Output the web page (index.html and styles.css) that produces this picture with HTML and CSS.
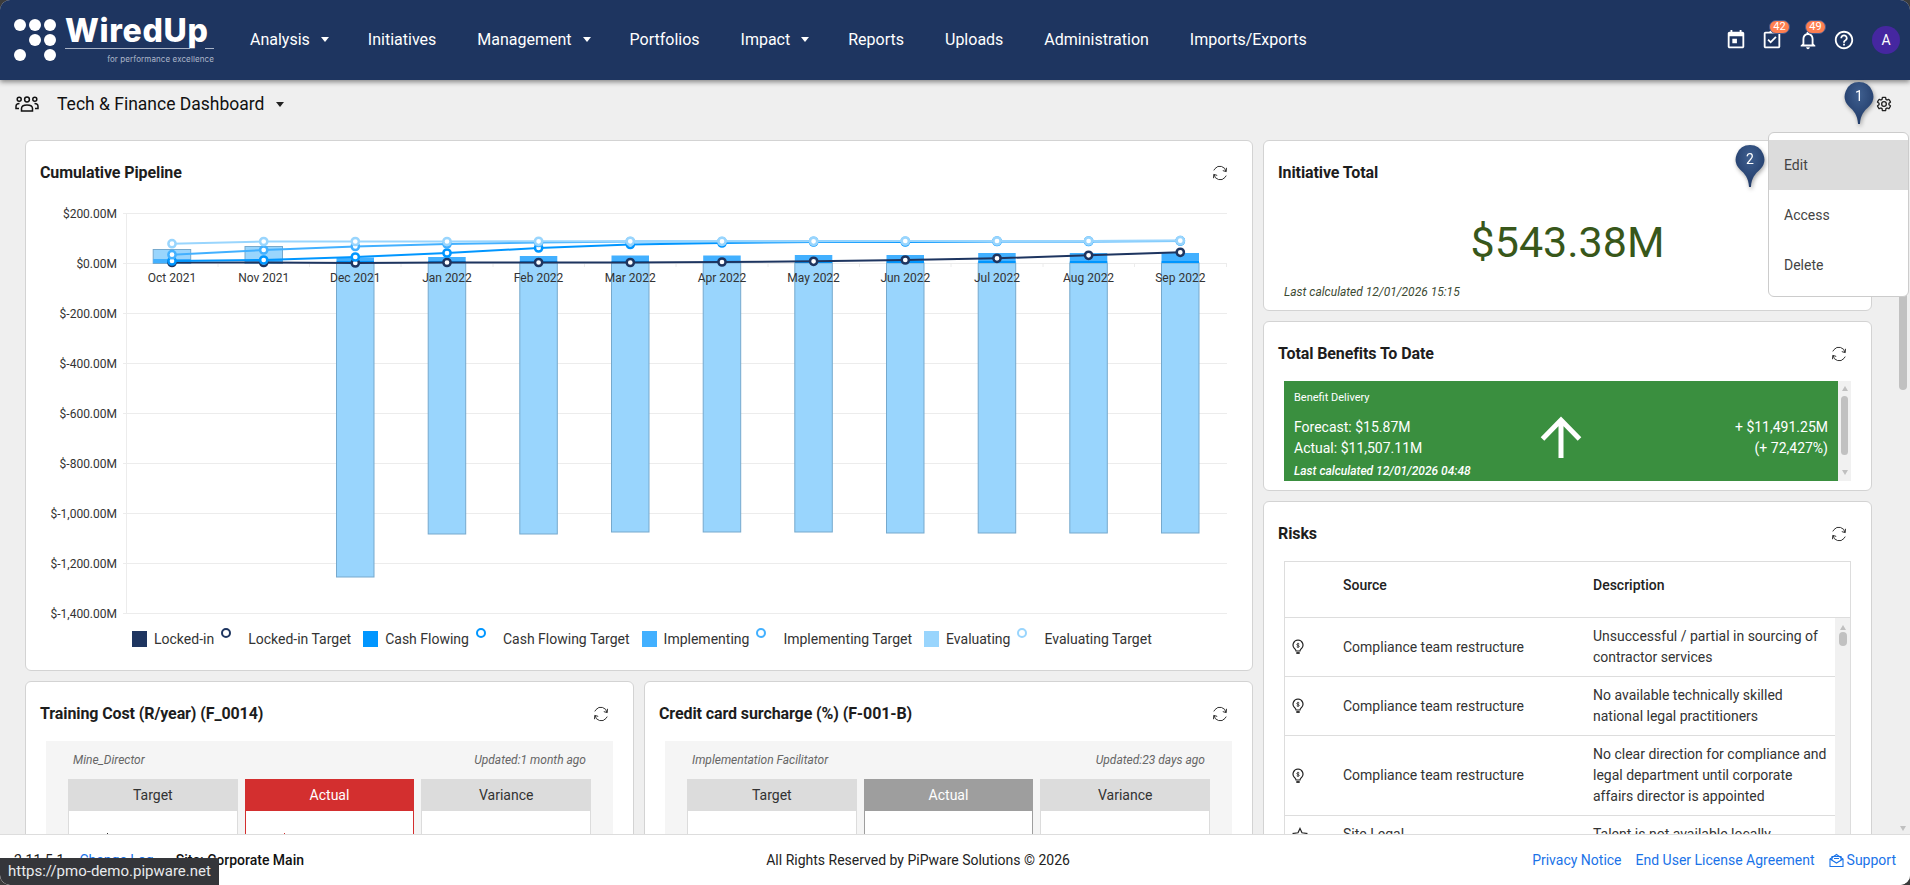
FILE: index.html
```html
<!DOCTYPE html>
<html lang="en">
<head>
<meta charset="utf-8">
<title>Tech &amp; Finance Dashboard</title>
<link rel="stylesheet" href="styles.css">
</head>
<body>
<div class="app">
  <header class="topbar">
    <div class="logo">
      <svg class="logo-dots" width="42" height="42" viewBox="14 20.7 42 42" fill="#fff">
        <circle cx="20" cy="26.7" r="6"/><circle cx="35" cy="26.7" r="6"/><circle cx="50" cy="26.7" r="6"/>
        <circle cx="35" cy="41.7" r="6"/><circle cx="50" cy="41.7" r="6"/>
        <circle cx="20" cy="56.7" r="6"/><circle cx="50" cy="56.7" r="6"/>
      </svg>
      <div class="logo-words">
        <div class="logo-name">WiredUp</div>
        <div class="logo-rule"><span class="rule-long"></span><span class="rule-short"></span></div>
        <div class="logo-tag">for performance excellence</div>
      </div>
    </div>
    <nav class="nav">
      <a class="nav-item">Analysis<i class="caret"></i></a>
      <a class="nav-item">Initiatives</a>
      <a class="nav-item">Management<i class="caret"></i></a>
      <a class="nav-item">Portfolios</a>
      <a class="nav-item">Impact<i class="caret"></i></a>
      <a class="nav-item">Reports</a>
      <a class="nav-item">Uploads</a>
      <a class="nav-item">Administration</a>
      <a class="nav-item">Imports/Exports</a>
    </nav>
    <div class="top-icons">
      <svg class="top-icon" viewBox="0 0 24 24" fill="#fff"><path d="M19 3h-1V1h-2v2H8V1H6v2H5c-1.110 0-2 .9-2 2v14c0 1.100.89 2 2 2h14c1.100 0 2-.9 2-2V5c0-1.100-.9-2-2-2zm0 16H5V8h14v11zM8 10.500h5v5H8z"/></svg>
      <span class="icon-wrap">
        <svg class="top-icon" viewBox="0 0 24 24" fill="#fff"><path d="M19 3h-4.200C14.400 1.800 13.300 1 12 1s-2.400.8-2.800 2H5c-1.100 0-2 .9-2 2v14c0 1.100.9 2 2 2h14c1.100 0 2-.9 2-2V5c0-1.100-.9-2-2-2zm0 16H5V5h14v14zm-2-9.600-1.400-1.400-5.100 5.100-2.100-2.100L7 12.400l3.500 3.500z"/></svg>
        <span class="badge">42</span>
      </span>
      <span class="icon-wrap">
        <svg class="top-icon" viewBox="0 0 24 24" fill="#fff"><path d="M12 22c1.100 0 2-.9 2-2h-4c0 1.100.9 2 2 2zm6-6v-5c0-3.070-1.630-5.640-4.500-6.320V4c0-.83-.67-1.500-1.500-1.500s-1.500.67-1.500 1.500v.68C7.640 5.360 6 7.920 6 11v5l-2 2v1h16v-1l-2-2zm-2 1H8v-6c0-2.480 1.510-4.500 4-4.500s4 2.020 4 4.500v6z"/></svg>
        <span class="badge">49</span>
      </span>
      <svg class="top-icon" viewBox="0 0 24 24" fill="#fff"><path d="M11 18h2v-2h-2v2zm1-16C6.480 2 2 6.480 2 12s4.480 10 10 10 10-4.480 10-10S17.520 2 12 2zm0 18c-4.410 0-8-3.590-8-8s3.590-8 8-8 8 3.590 8 8-3.590 8-8 8zm0-14c-2.210 0-4 1.790-4 4h2c0-1.100.9-2 2-2s2 .9 2 2c0 2-3 1.750-3 5h2c0-2.250 3-2.500 3-5 0-2.210-1.790-4-4-4z"/></svg>
      <span class="avatar">A</span>
    </div>
  </header>

  <main class="main">
    <div class="content">
      <div class="subbar">
        <svg class="people" width="24" height="16" viewBox="0 0 24 16" fill="none" stroke="#111" stroke-width="1.500">
          <circle cx="12" cy="3.500" r="2.400"/><circle cx="4.200" cy="3.200" r="2"/><circle cx="19.800" cy="3.200" r="2"/>
          <path d="M6.500 15v-2.500c0-2 2-3.500 5.500-3.500s5.500 1.500 5.500 3.500V15zM4.500 7.500C2.300 7.500 1 8.700 1 10.500v2h3M19.500 7.500c2.200 0 3.500 1.200 3.500 3v2h-3"/>
        </svg>
        <span class="sub-title">Tech &amp; Finance Dashboard</span>
        <i class="caret caret-dark"></i>
        <svg class="gear" width="16" height="16" viewBox="0 0 24 24" fill="none" stroke="#222" stroke-width="2"><path d="M19.430 12.980c.04-.32.07-.64.07-.98s-.03-.66-.07-.98l2.110-1.650c.19-.15.24-.42.12-.64l-2-3.460c-.12-.22-.39-.3-.61-.22l-2.490 1c-.52-.4-1.080-.73-1.690-.98l-.38-2.650C14.460 2.180 14.250 2 14 2h-4c-.25 0-.46.18-.49.42l-.38 2.650c-.61.25-1.170.59-1.690.98l-2.490-1c-.23-.09-.49 0-.61.22l-2 3.460c-.13.22-.07.49.12.64l2.110 1.650c-.04.32-.07.65-.07.98s.03.66.07.98l-2.110 1.650c-.19.15-.24.42-.12.64l2 3.460c.12.22.39.3.61.22l2.490-1c.52.4 1.080.73 1.690.98l.38 2.650c.03.24.24.42.49.42h4c.25 0 .46-.18.49-.42l.38-2.650c.61-.25 1.170-.59 1.690-.98l2.490 1c.23.09.49 0 .61-.22l2-3.460c.12-.22.07-.49-.12-.64l-2.110-1.650z"/><circle cx="12" cy="12" r="3.500"/></svg>
      </div>

      <div class="columns">
        <div class="col-left">
          <section class="card pipeline">
            <div class="card-head"><h2>Cumulative Pipeline</h2>
              <svg class="refresh" viewBox="0 0 16 16" fill="none" stroke="#333" stroke-width="1"><path d="M14 6.500A6.200 6.200 0 0 0 3 3.600L1.800 5.400M2 9.500a6.200 6.200 0 0 0 11 2.900l1.200-1.800"/><path d="M14.500 2.800 14.200 6.600 10.800 5.600M1.500 13.200l.3-3.800 3.400 1"/></svg>
            </div>
            <svg class="chart" width="1226" height="425" viewBox="26 200 1226 425">
              <g class="grid">
                <path d="M123 213.500H1227M123 263.500H1227M123 313.500H1227M123 363.500H1227M123 413.500H1227M123 463.500H1227M123 513.500H1227M123 563.500H1227M123 613.500H1227M126.500 213V614"/>
                <path d="M218 263v4M309.500 263v4M401 263v4M493 263v4M584.500 263v4M676 263v4M768 263v4M859.500 263v4M951 263v4M1043 263v4M1134.500 263v4M1226.500 263v4"/>
              </g>
              <g class="ylab">
                <text x="117" y="217.500">$200.00M</text><text x="117" y="267.500">$0.00M</text><text x="117" y="317.500">$-200.00M</text><text x="117" y="367.500">$-400.00M</text><text x="117" y="417.500">$-600.00M</text><text x="117" y="467.500">$-800.00M</text><text x="117" y="517.500">$-1,000.00M</text><text x="117" y="567.500">$-1,200.00M</text><text x="117" y="617.500">$-1,400.00M</text>
              </g>
              <g class="bar-eval">
                <rect x="153.200" y="249.500" width="37.500" height="14"/><rect x="245" y="246.500" width="37.500" height="17"/>
                <rect x="336.500" y="263" width="37.500" height="314"/><rect x="428.200" y="263" width="37.500" height="271"/><rect x="519.800" y="263" width="37.500" height="271"/><rect x="611.500" y="263" width="37.500" height="269"/><rect x="703.200" y="263" width="37.500" height="269"/><rect x="794.800" y="263" width="37.500" height="269"/><rect x="886.500" y="263" width="37.500" height="270"/><rect x="978.200" y="263" width="37.500" height="270"/><rect x="1069.800" y="263" width="37.500" height="270"/><rect x="1161.500" y="263" width="37.500" height="270"/>
              </g>
              <g class="bar-impl">
                <rect x="153.200" y="259" width="37.500" height="4"/><rect x="245" y="260" width="37.500" height="3"/>
                <rect x="336.500" y="257.500" width="37.500" height="4"/><rect x="428.200" y="257" width="37.500" height="4.500"/><rect x="519.800" y="256" width="37.500" height="5.500"/><rect x="611.500" y="255.500" width="37.500" height="6"/><rect x="703.200" y="255.500" width="37.500" height="6"/><rect x="794.800" y="255" width="37.500" height="6.500"/><rect x="886.500" y="255" width="37.500" height="6.500"/><rect x="978.200" y="253" width="37.500" height="8.500"/><rect x="1069.800" y="253" width="37.500" height="8.500"/><rect x="1161.500" y="253" width="37.500" height="8.500"/>
              </g>
              <g class="bar-cash">
                <rect x="336.500" y="261" width="37.500" height="2"/><rect x="428.200" y="261" width="37.500" height="2"/><rect x="519.800" y="261" width="37.500" height="2"/><rect x="611.500" y="261" width="37.500" height="2"/><rect x="703.200" y="261" width="37.500" height="2"/><rect x="794.800" y="261" width="37.500" height="2"/><rect x="886.500" y="261" width="37.500" height="2"/><rect x="978.200" y="261" width="37.500" height="2"/><rect x="1069.800" y="261" width="37.500" height="2"/><rect x="1161.500" y="261" width="37.500" height="2"/>
              </g>
              <g class="xlab">
                <text x="172" y="282">Oct 2021</text><text x="263.700" y="282">Nov 2021</text><text x="355.300" y="282">Dec 2021</text><text x="447" y="282">Jan 2022</text><text x="538.600" y="282">Feb 2022</text><text x="630.300" y="282">Mar 2022</text><text x="722" y="282">Apr 2022</text><text x="813.600" y="282">May 2022</text><text x="905.300" y="282">Jun 2022</text><text x="997" y="282">Jul 2022</text><text x="1088.600" y="282">Aug 2022</text><text x="1180.300" y="282">Sep 2022</text>
              </g>
              <g class="series s-lock">
                <polyline points="172,262.500 263.700,262.500 355.300,263 447,262.500 538.600,262.500 630.300,262.500 722,262 813.600,261.300 905.300,260 997,258.300 1088.600,255.300 1180.300,252.300"/>
                <circle cx="172" cy="262.500" r="3.600"/><circle cx="263.700" cy="262.500" r="3.600"/><circle cx="355.300" cy="263" r="3.600"/><circle cx="447" cy="262.500" r="3.600"/><circle cx="538.600" cy="262.500" r="3.600"/><circle cx="630.300" cy="262.500" r="3.600"/><circle cx="722" cy="262" r="3.600"/><circle cx="813.600" cy="261.300" r="3.600"/><circle cx="905.300" cy="260" r="3.600"/><circle cx="997" cy="258.300" r="3.600"/><circle cx="1088.600" cy="255.300" r="3.600"/><circle cx="1180.300" cy="252.300" r="3.600"/>
              </g>
              <g class="series s-cash">
                <polyline points="172,261 263.700,260 355.300,257 447,253 538.600,248 630.300,244.500 722,243 813.600,242 905.300,242 997,241.500 1088.600,241.500 1180.300,241"/>
                <circle cx="172" cy="261" r="3.600"/><circle cx="263.700" cy="260" r="3.600"/><circle cx="355.300" cy="257" r="3.600"/><circle cx="447" cy="253" r="3.600"/><circle cx="538.600" cy="248" r="3.600"/><circle cx="630.300" cy="244.500" r="3.600"/><circle cx="722" cy="243" r="3.600"/><circle cx="813.600" cy="242" r="3.600"/><circle cx="905.300" cy="242" r="3.600"/><circle cx="997" cy="241.500" r="3.600"/><circle cx="1088.600" cy="241.500" r="3.600"/><circle cx="1180.300" cy="241" r="3.600"/>
              </g>
              <g class="series s-impl">
                <polyline points="172,254.700 263.700,250 355.300,246.500 447,244 538.600,242.500 630.300,241.500 722,241.500 813.600,241.300 905.300,241.300 997,241 1088.600,241 1180.300,240.700"/>
                <circle cx="172" cy="254.700" r="3.600"/><circle cx="263.700" cy="250" r="3.600"/><circle cx="355.300" cy="246.500" r="3.600"/><circle cx="447" cy="244" r="3.600"/><circle cx="538.600" cy="242.500" r="3.600"/><circle cx="630.300" cy="241.500" r="3.600"/><circle cx="722" cy="241.500" r="3.600"/><circle cx="813.600" cy="241.300" r="3.600"/><circle cx="905.300" cy="241.300" r="3.600"/><circle cx="997" cy="241" r="3.600"/><circle cx="1088.600" cy="241" r="3.600"/><circle cx="1180.300" cy="240.700" r="3.600"/>
              </g>
              <g class="series s-eval">
                <polyline points="172,243.700 263.700,241.500 355.300,241.500 447,241.500 538.600,241.300 630.300,241.300 722,241.300 813.600,241.300 905.300,241 997,241 1088.600,241 1180.300,240.700"/>
                <circle cx="172" cy="243.700" r="3.600"/><circle cx="263.700" cy="241.500" r="3.600"/><circle cx="355.300" cy="241.500" r="3.600"/><circle cx="447" cy="241.500" r="3.600"/><circle cx="538.600" cy="241.300" r="3.600"/><circle cx="630.300" cy="241.300" r="3.600"/><circle cx="722" cy="241.300" r="3.600"/><circle cx="813.600" cy="241.300" r="3.600"/><circle cx="905.300" cy="241" r="3.600"/><circle cx="997" cy="241" r="3.600"/><circle cx="1088.600" cy="241" r="3.600"/><circle cx="1180.300" cy="240.700" r="3.600"/>
              </g>
            </svg>
            <div class="legend">
              <i class="swatch c-lock"></i><span class="leg-text">Locked-in</span><i class="ring r-lock"></i><span class="leg-text leg-target">Locked-in Target</span>
              <i class="swatch c-cash"></i><span class="leg-text">Cash Flowing</span><i class="ring r-cash"></i><span class="leg-text leg-target">Cash Flowing Target</span>
              <i class="swatch c-impl"></i><span class="leg-text">Implementing</span><i class="ring r-impl"></i><span class="leg-text leg-target">Implementing Target</span>
              <i class="swatch c-eval"></i><span class="leg-text">Evaluating</span><i class="ring r-eval"></i><span class="leg-text leg-target">Evaluating Target</span>
            </div>
          </section>

          <div class="kpi-row">
            <section class="card kpi">
              <div class="card-head"><h2>Training Cost (R/year) (F_0014)</h2>
                <svg class="refresh" viewBox="0 0 16 16" fill="none" stroke="#333" stroke-width="1"><path d="M14 6.500A6.200 6.200 0 0 0 3 3.600L1.800 5.400M2 9.500a6.200 6.200 0 0 0 11 2.900l1.200-1.800"/><path d="M14.500 2.800 14.200 6.600 10.800 5.600M1.500 13.200l.3-3.800 3.400 1"/></svg>
              </div>
              <div class="panel">
                <div class="panel-meta"><span>Mine_Director</span><span>Updated:1 month ago</span></div>
                <div class="boxes">
                  <div class="box"><div class="box-head">Target</div><div class="box-body"><i class="tick"></i></div></div>
                  <div class="box box-red"><div class="box-head">Actual</div><div class="box-body"><i class="tick"></i></div></div>
                  <div class="box"><div class="box-head">Variance</div><div class="box-body"></div></div>
                </div>
              </div>
            </section>
            <section class="card kpi">
              <div class="card-head"><h2>Credit card surcharge (%) (F-001-B)</h2>
                <svg class="refresh" viewBox="0 0 16 16" fill="none" stroke="#333" stroke-width="1"><path d="M14 6.500A6.200 6.200 0 0 0 3 3.600L1.800 5.400M2 9.500a6.200 6.200 0 0 0 11 2.900l1.200-1.800"/><path d="M14.500 2.800 14.200 6.600 10.800 5.600M1.500 13.200l.3-3.800 3.400 1"/></svg>
              </div>
              <div class="panel">
                <div class="panel-meta"><span>Implementation Facilitator</span><span>Updated:23 days ago</span></div>
                <div class="boxes">
                  <div class="box"><div class="box-head">Target</div><div class="box-body"></div></div>
                  <div class="box box-grey"><div class="box-head">Actual</div><div class="box-body"></div></div>
                  <div class="box"><div class="box-head">Variance</div><div class="box-body"></div></div>
                </div>
              </div>
            </section>
          </div>
        </div>

        <div class="col-right">
          <section class="card total">
            <div class="card-head"><h2>Initiative Total</h2></div>
            <div class="total-value">$543.38M</div>
            <div class="total-calc">Last calculated 12/01/2026 15:15</div>
          </section>

          <section class="card benefits">
            <div class="card-head"><h2>Total Benefits To Date</h2>
              <svg class="refresh" viewBox="0 0 16 16" fill="none" stroke="#333" stroke-width="1"><path d="M14 6.500A6.200 6.200 0 0 0 3 3.600L1.800 5.400M2 9.500a6.200 6.200 0 0 0 11 2.900l1.200-1.800"/><path d="M14.500 2.800 14.200 6.600 10.800 5.600M1.500 13.200l.3-3.800 3.400 1"/></svg>
            </div>
            <div class="benefit-wrap">
              <div class="benefit">
                <div class="benefit-title">Benefit Delivery</div>
                <div class="benefit-main">
                  <div class="benefit-lines"><div>Forecast: $15.87M</div><div>Actual: $11,507.11M</div></div>
                  <svg class="benefit-arrow" width="42" height="42" viewBox="0 0 42 42" fill="none" stroke="#fff" stroke-width="5"><path d="M21 42V4M2.500 23 21 4l18.500 19"/></svg>
                  <div class="benefit-lines benefit-right"><div>+ $11,491.25M</div><div>(+ 72,427%)</div></div>
                </div>
                <div class="benefit-calc">Last calculated 12/01/2026 04:48</div>
              </div>
              <div class="mini-sb"><i class="arrow-up"></i><i class="mini-thumb thumb-benefit"></i><i class="arrow-down"></i></div>
            </div>
          </section>

          <section class="card risks">
            <div class="card-head"><h2>Risks</h2>
              <svg class="refresh" viewBox="0 0 16 16" fill="none" stroke="#333" stroke-width="1"><path d="M14 6.500A6.200 6.200 0 0 0 3 3.600L1.800 5.400M2 9.500a6.200 6.200 0 0 0 11 2.900l1.200-1.800"/><path d="M14.500 2.800 14.200 6.600 10.800 5.600M1.500 13.200l.3-3.800 3.400 1"/></svg>
            </div>
            <div class="risk-table">
              <div class="risk-row risk-head"><span></span><span>Source</span><span>Description</span></div>
              <div class="risk-body">
                <div class="risk-rows">
                  <div class="risk-row">
                    <svg class="bulb" width="12" height="16" viewBox="0 0 12 16" fill="none" stroke="#222" stroke-width="1.200"><path d="M6 1a5 5 0 0 0-3.300 8.700C3.600 10.600 4 11.200 4 12h4c0-.8.400-1.400 1.300-2.300A5 5 0 0 0 6 1z"/><path d="M4.300 14h3.400" stroke-width="1.800"/><path d="M6 3.800v5M7.300 5C6.800 4.500 4.800 4.500 4.800 5.600S7.300 6.300 7.300 7.400 5.200 8.300 4.700 7.800" stroke-width=".8"/></svg>
                    <span>Compliance team restructure</span><span>Unsuccessful / partial in sourcing of contractor services</span>
                  </div>
                  <div class="risk-row">
                    <svg class="bulb" width="12" height="16" viewBox="0 0 12 16" fill="none" stroke="#222" stroke-width="1.200"><path d="M6 1a5 5 0 0 0-3.300 8.700C3.600 10.600 4 11.200 4 12h4c0-.8.400-1.400 1.300-2.300A5 5 0 0 0 6 1z"/><path d="M4.300 14h3.400" stroke-width="1.800"/><path d="M6 3.800v5M7.300 5C6.800 4.500 4.800 4.500 4.800 5.600S7.300 6.300 7.300 7.400 5.200 8.300 4.700 7.800" stroke-width=".8"/></svg>
                    <span>Compliance team restructure</span><span>No available technically skilled national legal practitioners</span>
                  </div>
                  <div class="risk-row">
                    <svg class="bulb" width="12" height="16" viewBox="0 0 12 16" fill="none" stroke="#222" stroke-width="1.200"><path d="M6 1a5 5 0 0 0-3.300 8.700C3.600 10.600 4 11.200 4 12h4c0-.8.400-1.400 1.300-2.300A5 5 0 0 0 6 1z"/><path d="M4.300 14h3.400" stroke-width="1.800"/><path d="M6 3.800v5M7.300 5C6.800 4.500 4.800 4.500 4.800 5.600S7.300 6.300 7.300 7.400 5.200 8.300 4.700 7.800" stroke-width=".8"/></svg>
                    <span>Compliance team restructure</span><span>No clear direction for compliance and legal department until corporate affairs director is appointed</span>
                  </div>
                  <div class="risk-row">
                    <svg class="bulb" width="16" height="16" viewBox="0 0 16 16" fill="none" stroke="#222" stroke-width="1.200"><path d="m8 1.500 2 4.300 4.700.6-3.400 3.200.9 4.600L8 11.900l-4.200 2.300.9-4.600L1.300 6.400 6 5.800z"/></svg>
                    <span>Site Legal</span><span>Talent is not available locally</span>
                  </div>
                </div>
                <div class="mini-sb mini-risk"><i class="arrow-up"></i><i class="mini-thumb thumb-risk"></i></div>
              </div>
            </div>
          </section>
        </div>
      </div>
    </div>
    <div class="page-sb"><i class="page-thumb"></i><i class="arrow-down"></i></div>
  </main>

  <footer class="footer">
    <div class="foot-left"><span>2.11.5.1</span><a class="link">Change Log</a><strong>Site: Corporate Main</strong></div>
    <div>All Rights Reserved by PiPware Solutions © 2026</div>
    <div class="foot-right"><a class="link">Privacy Notice</a><a class="link">End User License Agreement</a>
      <a class="link support"><svg width="15" height="15" viewBox="0 0 15 15" fill="none" stroke="#1a73e8" stroke-width="1.100"><path d="M1 6v7.500h13V6L7.500 1.500z"/><path d="M3 7V3.500h9V7M1 6l6.500 4L14 6M5 5.500h5"/></svg>Support</a></div>
  </footer>

  <div class="menu">
    <div class="menu-item menu-active">Edit</div>
    <div class="menu-item">Access</div>
    <div class="menu-item">Delete</div>
  </div>
  <div class="pin pin-one">
    <svg width="30" height="42" viewBox="0 0 30 42"><defs><radialGradient id="pinA" cx="50%" cy="30%" r="60%"><stop offset="0" stop-color="#3f5f8f"/><stop offset="1" stop-color="#243f6d"/></radialGradient></defs><path fill="url(#pinA)" d="M15 0a14.300 14.300 0 0 1 10 24.500C20 29 16.500 33 16 42h-2C13.500 33 10 29 5 24.500A14.300 14.300 0 0 1 15 0z"/></svg>
    <span class="pin-num">1</span>
  </div>
  <div class="pin pin-two">
    <svg width="30" height="42" viewBox="0 0 30 42"><path fill="url(#pinA)" d="M15 0a14.300 14.300 0 0 1 10 24.500C20 29 16.500 33 16 42h-2C13.500 33 10 29 5 24.500A14.300 14.300 0 0 1 15 0z"/></svg>
    <span class="pin-num">2</span>
  </div>
  <div class="url-tip">https://pmo-demo.pipware.net</div>
</div>
</body>
</html>
```

FILE: styles.css
```css
* { box-sizing: border-box; }
html, body { margin: 0; height: 100%; background: #3b3b3b; overflow: hidden; }
body { font-family: Roboto, "Liberation Sans", sans-serif; font-size: 14px; color: #222; }

.app { position: relative; display: flex; flex-direction: column; height: 885px; background: #efefef; border-radius: 10px; overflow: hidden; }

/* header */
.topbar { position: relative; z-index: 3; flex: none; display: flex; align-items: center; height: 80px; background: #1e3560; box-shadow: 0 2px 5px rgba(0,0,0,.45); color: #fff; padding: 0 10px 0 14px; }
.logo { display: flex; align-items: center; gap: 9px; width: 236px; flex: none; }
.logo-dots { flex: none; }
.logo-words { width: 150px; }
.logo-name { font-family: Inter, sans-serif; font-weight: 800; font-size: 32px; line-height: 30px; letter-spacing: .7px; }
.logo-rule { display: flex; height: 1px; margin-top: 2px; }
.rule-long { width: 125px; background: #aab4c6; }
.rule-short { width: 9px; margin-left: 15px; background: #aab4c6; }
.logo-tag { width: 149px; font-family: Inter, sans-serif; font-size: 8px; line-height: 12px; margin-top: 4px; text-align: right; color: #aeb8ca; letter-spacing: .1px; }
.nav { display: flex; align-items: center; gap: 41px; font-size: 16px; font-weight: 400; margin-top: -2px; }
.nav-item { display: flex; align-items: center; color: #fff; white-space: nowrap; }
.caret { display: inline-block; width: 0; height: 0; margin-left: 11px; margin-right: -2px; border-left: 4.500px solid transparent; border-right: 4.500px solid transparent; border-top: 5px solid #fff; }
.top-icons { margin-left: auto; display: flex; align-items: center; gap: 14px; }
.top-icon { display: block; width: 22px; height: 22px; }
.icon-wrap { position: relative; display: block; }
.badge { position: absolute; top: -9px; left: 8px; min-width: 21px; height: 14px; padding: 0 3px; border-radius: 7px; background: #ff7f50; border: 1px solid #41598f; color: #fff; font-size: 11px; line-height: 12px; text-align: center; }
.avatar { width: 28px; height: 28px; margin-left: 3px; border-radius: 50%; background: #4527a0; color: #fff; display: flex; align-items: center; justify-content: center; font-size: 14px; }

/* main */
.main { flex: 1; min-height: 0; display: flex; overflow: hidden; }
.content { width: 1872px; flex: none; padding-left: 25px; }
.subbar { display: flex; align-items: center; height: 60px; padding: 0 0 12px; margin-left: -10px; position: relative; }
.people { flex: none; }
.sub-title { margin-left: 18px; font-size: 17.500px; color: #111; }
.caret-dark { border-top-color: #222; margin-left: 12px; margin-right: 0; border-left-width: 4px; border-right-width: 4px; }
.gear { margin-left: auto; margin-right: -20px; }
.columns { display: flex; gap: 10px; }
.col-left { width: 1228px; flex: none; display: flex; flex-direction: column; gap: 10px; }
.col-right { width: 609px; flex: none; display: flex; flex-direction: column; gap: 10px; }
.kpi-row { display: flex; gap: 10px; }

.card { background: #fff; border: 1px solid #d3d3d3; border-radius: 6px; padding-top: 21px; }
.card-head { display: flex; align-items: center; justify-content: space-between; height: 22px; padding: 0 24px 0 14px; }
.card-head h2 { margin: 0; font-size: 16px; font-weight: 700; color: #1d1d1d; line-height: 22px; letter-spacing: -.1px; }
.refresh { width: 16px; height: 16px; flex: none; }

.chart { display: block; margin-top: 16px; }
.grid path { fill: none; stroke: #ececec; stroke-width: 1; }
.ylab text { font-size: 12px; text-anchor: end; fill: #333; }
.xlab text { font-size: 12px; text-anchor: middle; fill: #333; }
.bar-eval rect { fill: #99d5fd; stroke: #76a9cd; }
.bar-impl rect { fill: #42b0ff; stroke: none; }
.bar-cash rect { fill: #0096ff; stroke: none; }
.series polyline { fill: none; stroke-width: 2; }
.series circle { fill: #fff; stroke-width: 2.500; }
.s-lock polyline, .s-lock circle { stroke: #1e3560; }
.s-cash polyline, .s-cash circle { stroke: #0096ff; }
.s-impl polyline, .s-impl circle { stroke: #42b0ff; }
.s-eval polyline, .s-eval circle { stroke: #99d5fd; }

.legend { display: flex; align-items: center; height: 16px; margin: 6px 0 23px 106px; color: #333; font-size: 14px; }
.swatch { width: 15px; height: 16px; flex: none; margin-right: 7px; }
.c-lock { background: #1e3560; }
.c-cash { background: #0096ff; }
.c-impl { background: #42b0ff; }
.c-eval { background: #99d5fd; }
.ring { width: 10px; height: 10px; flex: none; margin: 0 17px 12px 7px; border-radius: 50%; border: 2.500px solid #1e3560; background: #fff; }
.r-cash { border-color: #0096ff; }
.r-impl { border-color: #42b0ff; }
.r-eval { border-color: #99d5fd; }
.leg-text { white-space: nowrap; }
.leg-target { margin-right: 12px; }

.kpi { width: 609px; height: 400px; flex: none; }
.panel { margin: 16px 20px 0; background: #f5f5f5; padding: 11px 22px 0; height: 300px; }
.panel-meta { display: flex; justify-content: space-between; padding: 0 5px; height: 16px; line-height: 16px; font-size: 12px; font-style: italic; color: #666; }
.boxes { display: grid; grid-template-columns: repeat(3, 1fr); gap: 7px; margin-top: 11px; }
.box { border: 1px solid #dcdcdc; background: #fff; height: 200px; }
.box-head { margin: -1px -1px 0; height: 32px; background: #dcdcdc; color: #333; font-size: 14px; line-height: 32px; text-align: center; }
.box-body { padding: 22px 0 0 38px; }
.tick { display: block; width: 1px; height: 3px; background: #333; }
.box-red { border-color: #d32f2f; }
.box-red .box-head { background: #d32f2f; color: #fff; }
.box-red .tick { background: #d32f2f; }
.box-grey { border-color: #9e9e9e; }
.box-grey .box-head { background: #9e9e9e; color: #fff; }

.total { height: 171px; }
.total-value { margin-top: 33px; font-size: 43px; line-height: 50px; color: #38571a; text-align: center; }
.total-calc { margin: 17px 0 0 20px; font-size: 12px; line-height: 16px; font-style: italic; color: #3c4a33; }

.benefits { height: 170px; }
.benefit-wrap { display: flex; margin: 16px 0 0 20px; width: 567px; height: 100px; }
.benefit { flex: 1; background: #3a8f3f; color: #fff; padding: 10px 10px 0; }
.benefit-title { font-size: 11px; line-height: 14px; }
.benefit-main { display: flex; align-items: center; justify-content: space-between; margin-top: 12px; height: 42px; }
.benefit-lines { line-height: 21px; font-size: 14px; white-space: nowrap; width: 200px; }
.benefit-right { text-align: right; }
.benefit-arrow { display: block; margin-top: -3px; }
.benefit-calc { font-size: 12px; line-height: 16px; font-style: italic; font-weight: 500; margin-top: 4px; }
.mini-sb { flex: none; width: 13px; background: #f1f1f1; display: flex; flex-direction: column; align-items: center; padding-top: 5px; }
.mini-thumb { display: block; width: 7px; background: #c1c1c1; border-radius: 4px; }
.thumb-benefit { height: 59px; margin-top: 5px; }
.arrow-up { display: block; width: 0; height: 0; border-left: 3.500px solid transparent; border-right: 3.500px solid transparent; border-bottom: 5px solid #c0c0c0; }
.arrow-down { display: block; width: 0; height: 0; border-left: 3.500px solid transparent; border-right: 3.500px solid transparent; border-top: 5px solid #c0c0c0; }
.mini-sb .arrow-down { margin-top: 15px; }

.risks { height: 500px; }
.risk-table { margin: 16px 0 0 20px; width: 567px; border: 1px solid #ddd; }
.risk-row { display: grid; grid-template-columns: 58px 250px 1fr; align-items: center; line-height: 21px; padding: 8px 0; border-bottom: 1px solid #ddd; font-size: 14px; color: #333; }
.risk-row > :nth-child(3) { padding-right: 8px; }
.risk-head { height: 56px; font-weight: 500; color: #222; padding-bottom: 16px; }
.risk-body { display: flex; }
.risk-rows { flex: 1; min-width: 0; }
.bulb { margin-left: 7px; }
.mini-risk { width: 15px; padding-top: 7px; }
.thumb-risk { width: 8px; height: 14px; margin-top: 2px; }

/* page scrollbar */
.page-sb { flex: 1; display: flex; flex-direction: column; align-items: center; padding: 70px 0 3px 24px; }
.page-thumb { display: block; width: 8px; height: 240px; background: #c1c1c1; border-radius: 4px; }
.page-sb .arrow-down { margin-top: auto; }

/* footer */
.footer { position: relative; z-index: 2; flex: none; display: flex; align-items: center; justify-content: space-between; height: 51px; padding: 0 14px; background: #fff; border-top: 1px solid #ddd; font-size: 14px; color: #222; }
.foot-left { display: flex; align-items: center; }
.foot-left .link { margin: 0 22px 0 15px; }
.foot-left strong { font-weight: 500; color: #111; }
.foot-right { display: flex; align-items: center; gap: 14px; }
.link { color: #1a73e8; }
.support { display: flex; align-items: center; gap: 3px; }

/* overlays */
.menu { position: absolute; z-index: 6; top: 132px; right: 1px; width: 141px; height: 165px; padding: 7px 0; background: #fff; border: 1px solid #ccc; border-radius: 6px; }
.menu-item { height: 50px; line-height: 50px; padding-left: 15px; color: #444; font-size: 14px; }
.menu-active { background: #dcdcdc; }
.pin { position: absolute; z-index: 7; width: 30px; height: 42px; filter: drop-shadow(1px 2px 2px rgba(0,0,0,.35)); }
.pin svg { display: block; }
.pin-num { position: absolute; top: 5px; left: 0; width: 30px; text-align: center; color: #fff; font-size: 14px; line-height: 18px; }
.pin-one { left: 1844px; top: 82px; }
.pin-two { left: 1735px; top: 145px; }
.url-tip { position: absolute; z-index: 8; left: 0; bottom: 0; height: 27px; padding: 0 8px; background: #35363a; color: #e8eaed; font-size: 15px; line-height: 27px; border-top-right-radius: 3px; }
```
